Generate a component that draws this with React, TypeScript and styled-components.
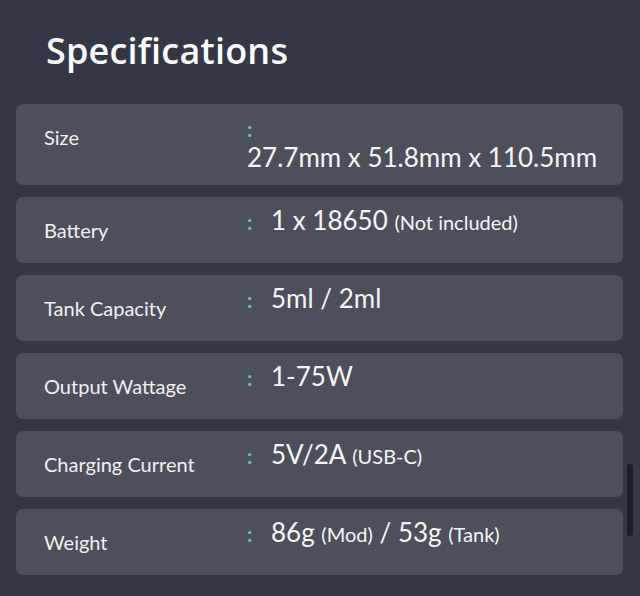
import React from 'react';
import styled, { createGlobalStyle } from 'styled-components';

type Spec = {
  label: string;
  parts: { text: string; small?: boolean }[];
};

const specs: Spec[] = [
  { label: 'Size', parts: [{ text: '27.7mm x 51.8mm x 110.5mm' }] },
  { label: 'Battery', parts: [{ text: '1 x 18650 ' }, { text: '(Not included)', small: true }] },
  { label: 'Tank Capacity', parts: [{ text: '5ml / 2ml' }] },
  { label: 'Output Wattage', parts: [{ text: '1-75W' }] },
  { label: 'Charging Current', parts: [{ text: '5V/2A ' }, { text: '(USB-C)', small: true }] },
  {
    label: 'Weight',
    parts: [
      { text: '86g ' },
      { text: '(Mod)', small: true },
      { text: ' / 53g ' },
      { text: '(Tank)', small: true },
    ],
  },
];

export default function App() {
  return (
    <>
      <GlobalStyle />
      <Page>
        <Title>Specifications</Title>
        <SpecList>
          {specs.map((spec) => (
            <SpecRow key={spec.label}>
              <Label>{spec.label}</Label>
              <ValueCell>
                <Colon>:</Colon>
                <ValueText>
                  {spec.parts.map((p, i) =>
                    p.small ? <Small key={i}>{p.text}</Small> : <span key={i}>{p.text}</span>
                  )}
                </ValueText>
              </ValueCell>
            </SpecRow>
          ))}
        </SpecList>
        <ScrollThumb />
      </Page>
    </>
  );
}

const GlobalStyle = createGlobalStyle`
  html, body {
    margin: 0;
    padding: 0;
    background: #343746;
  }
  body {
    font-family: Lato, "Open Sans", sans-serif;
    color: #f3f3f5;
  }
`;

const Page = styled.div`
  position: relative;
  min-height: 596px;
  box-sizing: border-box;
  padding: 0 17px 20px 16px;
  background: #343746;
`;

const Title = styled.h2`
  margin: 0;
  padding: 28px 0 30px 30px;
  font-family: "Open Sans", Lato, sans-serif;
  font-size: 36px;
  line-height: 46px;
  font-weight: 600;
  letter-spacing: 0.2px;
  color: #fafafa;
`;

const SpecList = styled.div`
  display: flex;
  flex-direction: column;
  gap: 12px;
`;

const SpecRow = styled.div`
  display: grid;
  grid-template-columns: 203px 1fr;
  align-items: start;
  box-sizing: border-box;
  min-height: 66px;
  padding: 9px 28px 14px;
  border-radius: 7px;
  background: #4d4f5c;
`;

const Label = styled.div`
  margin-top: 10px;
  font-size: 20px;
  line-height: 28px;
  color: #f0f0f2;
`;

const ValueCell = styled.div`
  font-size: 26px;
  line-height: 28px;
`;

const Colon = styled.span`
  display: inline-block;
  width: 24px;
  font-size: 21px;
  font-weight: 700;
  color: #5ec8b0;
`;

const ValueText = styled.span`
  display: inline-block;
  white-space: nowrap;
  color: #f5f5f7;
`;

const Small = styled.span`
  font-size: 20px;
`;

const ScrollThumb = styled.div`
  position: absolute;
  top: 464px;
  right: 7px;
  width: 6px;
  height: 72px;
  border-radius: 3px;
  background: #1d1e27;
`;
